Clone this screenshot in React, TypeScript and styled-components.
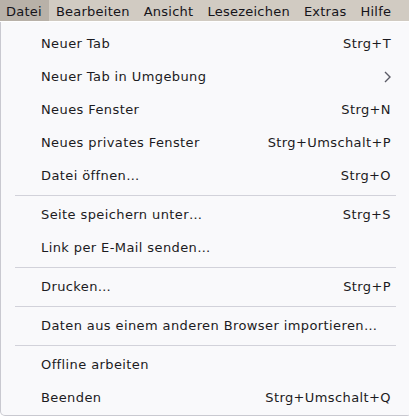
import * as React from 'react'
import styled, { createGlobalStyle } from 'styled-components'

const GlobalStyle = createGlobalStyle`
    html, body {
        margin: 0;
        padding: 0;
        background: #ffffff;
        overflow: hidden;
    }
    body {
        font-family: "DejaVu Sans", Verdana, sans-serif;
        font-size: 13px;
        color: #1c1b22;
    }
`

const MenuBar = styled.nav`
    display: flex;
    height: 21px;
    background: #d1cbc2;
    align-items: stretch;
`

const MenuBarItem = styled.div<{ $active?: boolean }>`
    display: flex;
    align-items: center;
    padding: 1px 7px 0 6px;
    margin-right: 1px;
    background: ${(p) => (p.$active ? '#b8b1a8' : 'transparent')};
    color: #15141a;
    letter-spacing: 0.24px;
    white-space: nowrap;
`

const Popup = styled.div`
    width: 412px;
    box-sizing: border-box;
    background: #f9f9fb;
    border: 1px solid #c9c9d0;
    border-top: none;
    border-radius: 0 0 5px 5px;
    padding: 5px 0 1px;
    margin-top: 1px;
`

const Item = styled.div`
    display: flex;
    align-items: center;
    justify-content: space-between;
    height: 33px;
    padding: 0 20px 0 40px;
    letter-spacing: 0.4px;
    white-space: nowrap;
`

const Shortcut = styled.span`
    color: #1c1b22;
`

const Separator = styled.div`
    height: 1px;
    margin: 2.5px 15px 2.5px 14px;
    background: #d2d2da;
`

const Chevron = () => (
    <svg width="9" height="12" viewBox="0 0 9 12" style={{ marginRight: '-1px' }}>
        <polyline
            points="2,1 7,6 2,11"
            fill="none"
            stroke="#5b5b66"
            strokeWidth="1.4"
        />
    </svg>
)

type Entry =
    | { label: string; shortcut?: string; submenu?: boolean }
    | 'sep'

const entries: Entry[] = [
    { label: 'Neuer Tab', shortcut: 'Strg+T' },
    { label: 'Neuer Tab in Umgebung', submenu: true },
    { label: 'Neues Fenster', shortcut: 'Strg+N' },
    { label: 'Neues privates Fenster', shortcut: 'Strg+Umschalt+P' },
    { label: 'Datei öffnen…', shortcut: 'Strg+O' },
    'sep',
    { label: 'Seite speichern unter…', shortcut: 'Strg+S' },
    { label: 'Link per E-Mail senden…' },
    'sep',
    { label: 'Drucken…', shortcut: 'Strg+P' },
    'sep',
    { label: 'Daten aus einem anderen Browser importieren…' },
    'sep',
    { label: 'Offline arbeiten' },
    { label: 'Beenden', shortcut: 'Strg+Umschalt+Q' },
]

const menus = ['Datei', 'Bearbeiten', 'Ansicht', 'Lesezeichen', 'Extras', 'Hilfe']

export default function App() {
    return (
        <>
            <GlobalStyle />
            <MenuBar>
                {menus.map((m, i) => (
                    <MenuBarItem key={m} $active={i === 0}>
                        {m}
                    </MenuBarItem>
                ))}
            </MenuBar>
            <Popup>
                {entries.map((e, i) =>
                    e === 'sep' ? (
                        <Separator key={i} />
                    ) : (
                        <Item key={i}>
                            <span>{e.label}</span>
                            {e.shortcut && <Shortcut>{e.shortcut}</Shortcut>}
                            {e.submenu && <Chevron />}
                        </Item>
                    )
                )}
            </Popup>
        </>
    )
}
